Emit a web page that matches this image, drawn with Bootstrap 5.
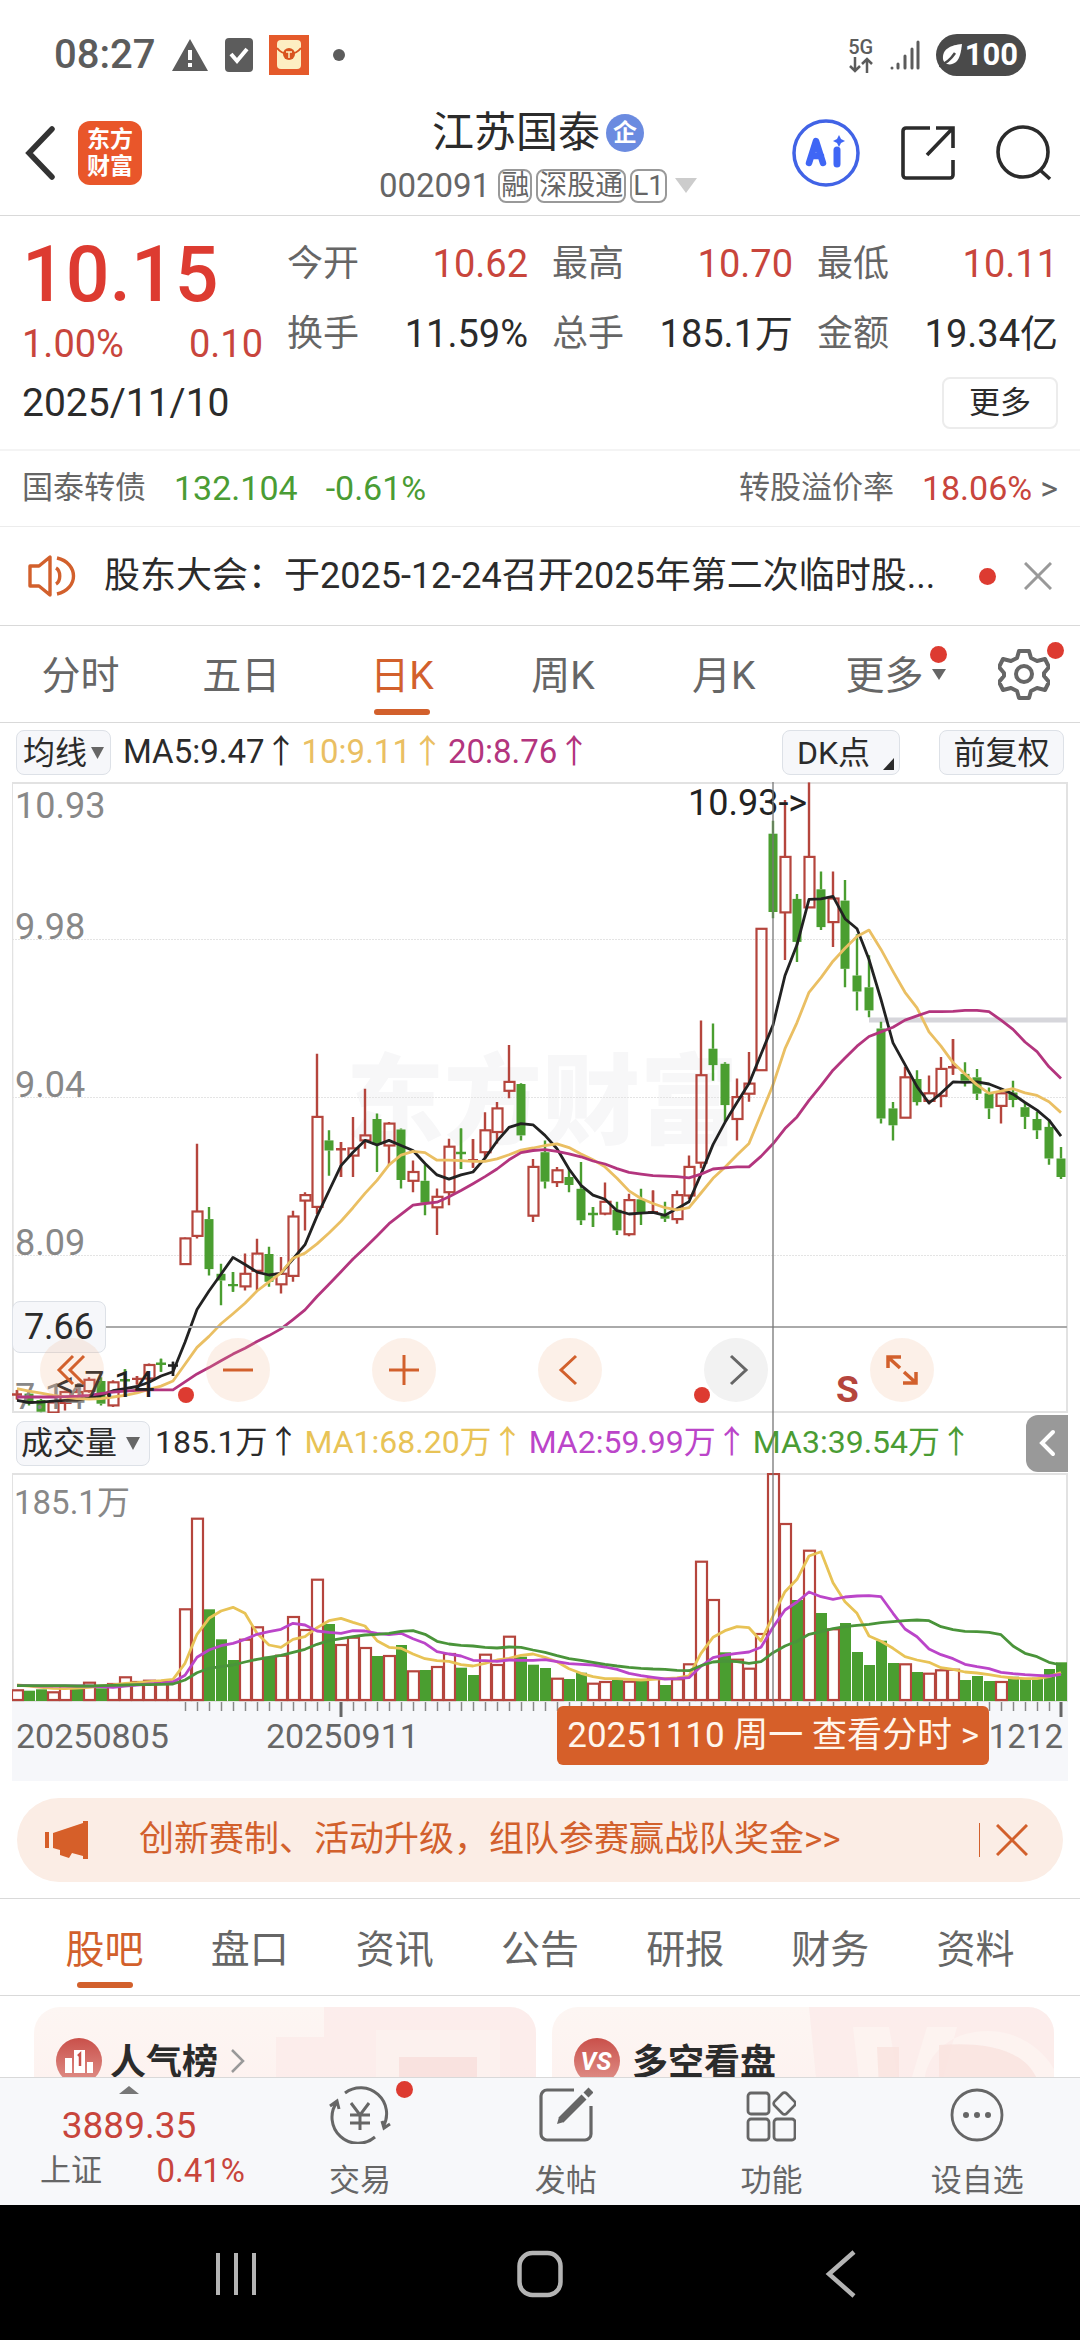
<!DOCTYPE html>
<html lang="zh-CN">
<head>
<meta charset="utf-8">
<meta name="viewport" content="width=device-width, initial-scale=1">
<title>江苏国泰 002091</title>
<link href="https://cdn.jsdelivr.net/npm/bootstrap@5.3.0/dist/css/bootstrap.min.css" rel="stylesheet">
<style>
  :root { --up:#c8453c; --hot:#dd3b31; --down:#4a9c34; --brand:#d2602c; --ink:#2b2b2b; --mute:#666; --line:#d9d9d9; }
  body { font-family: Roboto, "Noto Sans CJK SC", sans-serif; color: var(--ink); background: #fff; height: 100vh; overflow: hidden; line-height: 1.3; }
  body > * { flex: none; }
  a { color: inherit; text-decoration: none; }
  button { color: inherit; }
  svg { display: block; flex: none; }
  .plain { border: 0; background: none; padding: 0; }
  .up { color: var(--up); } .down { color: var(--down); } .mute { color: var(--mute); } .brand { color: var(--brand); }
  .rule { border-bottom: 1px solid var(--line); }
  .dot { width: 17px; height: 17px; border-radius: 50%; background: var(--hot); }

  .status { height: 90px; padding: 20px 54px 0; color: #5c5c5c; font-size: 40px; font-weight: 500; }
  .power { background: #4a4a4a; color: #fff; border-radius: 21px; height: 42px; padding: 0 8px 0 3px; font-size: 31px; font-weight: 700; }
  .net { font-size: 20px; line-height: 20px; }

  .top { height: 126px; padding: 0 28px 0 24px; }
  .side { width: 290px; }
  .acts { gap: 41px; }
  .logo { width: 64px; height: 64px; border-radius: 12px; background: #e9562a; color: #fff; font-size: 23px; line-height: 27px; font-weight: 700; margin-left: 22px; }
  .stock { font-size: 42px; line-height: 50px; }
  .corp { width: 38px; height: 38px; border-radius: 50%; background: #6b8be0; color: #fff; font-size: 24px; line-height: 38px; font-weight: 700; text-align: center; margin-left: 6px; }
  .code { font-size: 33px; line-height: 40px; }
  .chip { border: 2px solid #999; border-radius: 8px; font-size: 28px; line-height: 30px; padding: 0 1px; }

  .quote { padding: 19px 22px 0; }
  .quote .row { --bs-gutter-x: 24px; }
  .price { font-size: 77px; line-height: 80px; font-weight: 500; color: var(--hot); }
  .fig { font-size: 38px; line-height: 50px; }
  .fig .lbl { font-size: 36px; color: var(--mute); }
  .day { font-size: 39px; }
  .more { border: 2px solid #ececec; border-radius: 8px; background: #fff; height: 52px; width: 116px; font-size: 31px; line-height: 44px; }
  .bond { height: 78px; padding: 0 22px; font-size: 34px; border-top: 2px solid #f4f4f4; border-bottom: 1px solid #ececec; }
  .bond .lbl { font-size: 31px; color: var(--mute); }
  .notice { height: 99px; padding: 0 28px; font-size: 36px; }

  .tabs { font-size: 39px; color: var(--mute); }
  .tabs a { position: relative; flex: 1 1 0; text-align: center; }
  .tabs a.on { color: var(--brand); }
  .tabs a.on::after { content: ""; position: absolute; left: 50%; margin-left: -28px; width: 56px; height: 6px; border-radius: 3px; background: var(--brand); }
  .period { height: 97px; }
  .period a { line-height: 101px; }
  .period a.on::after { bottom: 7px; }
  .sections { height: 98px; padding: 0 32px; border-top: 1px solid var(--line); }
  .sections a { line-height: 102px; height: 96px; }
  .period a { height: 96px; }
  .sections a.on::after { bottom: 7px; }
  .tabdot { position: absolute; top: 20px; right: 18px; }
  .tabtri { position: absolute; top: 43px; right: 19px; }
  .period a.gear { flex: 0 0 115px; }
  .gear svg { margin-left: 33px; }

  .tool { border: 1px solid #dde1e7; border-radius: 8px; background: #f6f7fa; font-size: 32px; line-height: 42px; height: 45px; padding: 0 6px; }
  .dk { width: 118px; padding: 0 5px 0 14px; }
  .adj { width: 125px; margin-left: 39px; }
  .indic { height: 59px; padding: 0 16px; font-size: 33px; }
  .volbar { height: 60px; padding-left: 4px; font-size: 32px; gap: 5px; }
  .volbar .tool { padding: 0 4px; }
  .charts { margin: 0 12px; }
  .plot { width: 100%; height: auto; }
  .charts text { font-family: Roboto, "Noto Sans CJK SC", sans-serif; }
  .cross { position: absolute; top: 0; left: 72.06%; width: 2px; margin-left: -1px; height: 920px; background: #777; opacity: .65; }
  .pads { position: absolute; left: 28px; bottom: 11px; gap: 102px; }
  .pads button { width: 64px; height: 64px; border-radius: 50%; background: rgba(240,170,130,.18); }
  .pads .off { background: #f2f2f2; }
  .pads svg { width: 40px; height: 40px; margin: auto; }
  .crossprice { position: absolute; left: 0; top: 519px; width: 94px; height: 52px; border: 1px solid #dde1e7; border-radius: 8px; background: #f6f7fa; font-size: 36px; line-height: 50px; text-align: center; }
  .fold { background: #999; border-radius: 12px 0 0 12px; width: 42px; height: 57px; }
  .daytip { position: absolute; right: 79px; bottom: 16px; background: #d65f29; border-radius: 6px; color: #fff6ec; font-size: 35px; line-height: 59px; padding: 0 10px; white-space: nowrap; }

  .promo { margin: 17px 17px 16px; height: 84px; border-radius: 42px; background: #fbede5; padding: 0 35px 0 28px; font-size: 35px; }
  .promo a { margin-left: 50px; }
  .feed { flex: 1 1 0; min-height: 0; overflow: hidden; padding: 11px 26px 0 34px; gap: 16px; }
  .tile { position: relative; flex: 1 1 0; height: 160px; border-radius: 26px; overflow: hidden; background: linear-gradient(#fdf6f3, #fdeeec); font-size: 36px; line-height: 48px; font-weight: 700; padding: 28px 22px; }
  .tile .art { position: absolute; right: 0; top: 0; }
  .tile .face { position: relative; }
  .face span { padding-top: 4px; }
  .dock { height: 128px; background: #f7f8fa; border-top: 1px solid var(--line); font-size: 31px; color: var(--mute); }
  .index { width: 23.8%; padding: 28px 12px 0 40px; }
  .index .num { font-size: 37px; line-height: 40px; padding-right: 27px; }
  .index .pct { font-size: 33px; line-height: 50px; }
  .index .mute { font-size: 31px; }
  .dock a.item { flex: 1 1 0; padding-top: 8px; position: relative; }
  .item .dot { position: absolute; top: 3px; left: 50%; margin-left: 36px; }
  .item span.cap { line-height: 40px; margin-top: 17px; }
  .sysnav { height: 135px; background: #000; padding: 3px 208px 0; }
</style>
</head>
<body class="d-flex flex-column">

<div class="status d-flex align-items-center">
  <span>08:27</span>
  <svg class="ms-3" width="38" height="34" viewBox="0 0 38 34"><path d="M19 1 37 33H1z" fill="#5c5c5c"/><path d="M19 12v10M19 25v4" stroke="#fff" stroke-width="4"/></svg>
  <svg class="ms-3" width="28" height="34" viewBox="0 0 28 34"><rect width="28" height="34" rx="4" fill="#5c5c5c"/><path d="M6 16l6 7 10-12" fill="none" stroke="#fff" stroke-width="4"/></svg>
  <svg class="ms-3" width="40" height="40" viewBox="0 0 40 40"><rect width="40" height="40" fill="#e55a2b"/><rect x="8" y="5" width="24" height="29" rx="4" fill="#fdeec2"/><path d="M8 13c6 8 18 8 24 0" fill="none" stroke="#d9531f" stroke-width="2"/><circle cx="20" cy="19" r="6" fill="#d9531f"/><path d="M17 17h6M20 17v6" stroke="#fdeec2" stroke-width="1.5"/></svg>
  <svg class="ms-4" width="12" height="12" viewBox="0 0 12 12"><circle cx="6" cy="6" r="6" fill="#5c5c5c"/></svg>
  <div class="net ms-auto d-flex flex-column align-items-center">
    <span>5G</span>
    <svg width="26" height="16" viewBox="0 0 26 16" fill="none" stroke="#5c5c5c" stroke-width="2.5"><path d="M7 0v14M2 9l5 5 5-5M19 16V2M14 7l5-5 5 5"/></svg>
  </div>
  <svg class="mx-3" width="30" height="30" viewBox="0 0 30 30" stroke="#5c5c5c" stroke-width="3" stroke-linecap="round"><path d="M2 28v0M8 28v-4M15 28V16M22 28V9M28 28V2"/></svg>
  <div class="power d-flex align-items-center">
    <svg width="26" height="26" viewBox="0 0 26 26"><path d="M23 2C12 3 3 7 4 17c1 6 8 7 13 3 4-4 5-10 6-18z" fill="#fff"/><path d="M0 24c6-2 12-7 16-13" stroke="#4a4a4a" stroke-width="2.5" fill="none"/></svg>
    <span>100</span>
  </div>
</div>

<header class="top rule d-flex align-items-center justify-content-between">
  <div class="side d-flex align-items-center">
    <button class="plain" aria-label="返回"><svg width="32" height="54" viewBox="0 0 32 54" fill="none" stroke="#333" stroke-width="5.500" stroke-linecap="round"><path d="M28 3 5 27l23 24"/></svg></button>
    <a href="#" class="logo d-flex flex-column align-items-center justify-content-center"><span>东方</span><span>财富</span></a>
  </div>
  <div class="d-flex flex-column align-items-center pt-2">
    <div class="d-flex align-items-center"><h1 class="stock m-0 fw-normal">江苏国泰</h1><span class="corp">企</span></div>
    <div class="d-flex align-items-center gap-1 code mute pt-2"><span class="me-1">002091</span><span class="chip">融</span><span class="chip">深股通</span><span class="chip">L1</span>
      <svg class="ms-1" width="22" height="15" viewBox="0 0 22 15"><path d="M0 0h22L11 15z" fill="#ccc"/></svg></div>
  </div>
  <div class="side acts d-flex align-items-center justify-content-end">
    <button class="plain" aria-label="AI"><svg width="68" height="68" viewBox="0 0 68 68"><circle cx="34" cy="34" r="32" fill="none" stroke="#4163e6" stroke-width="3.5"/><path d="M17 44 24 22l7 22M20 37h9" fill="none" stroke="#3f66f5" stroke-width="6.5" stroke-linejoin="round" stroke-linecap="round"/><path d="M45 31v14" stroke="#3f66f5" stroke-width="7" stroke-linecap="round"/><path d="M47 16l2 4 4 2-4 2-2 4-2-4-4-2 4-2z" fill="#3f66f5"/></svg></button>
    <button class="plain" aria-label="分享"><svg width="54" height="54" viewBox="0 0 54 54" fill="none" stroke="#2b2b2b" stroke-width="3.6"><path d="M29 2H5a3 3 0 0 0-3 3v44a3 3 0 0 0 3 3h44a3 3 0 0 0 3-3V34M26 29 51 3M35 2h17v20"/></svg></button>
    <button class="plain" aria-label="搜索"><svg width="56" height="56" viewBox="0 0 56 56" fill="none" stroke="#2b2b2b" stroke-width="3.6"><circle cx="27" cy="27" r="25"/><path d="M44 45l10 9"/></svg></button>
  </div>
</header>

<section class="quote">
  <div class="row">
    <div class="col-3">
      <div class="price">10.15</div>
      <div class="fig up d-flex justify-content-between pt-1"><span>1.00%</span><span>0.10</span></div>
    </div>
    <div class="col-3 fig pt-1">
      <div class="d-flex justify-content-between"><span class="lbl">今开</span><span class="up">10.62</span></div>
      <div class="d-flex justify-content-between mt-3 pt-1"><span class="lbl">换手</span><span>11.59%</span></div>
    </div>
    <div class="col-3 fig pt-1">
      <div class="d-flex justify-content-between"><span class="lbl">最高</span><span class="up">10.70</span></div>
      <div class="d-flex justify-content-between mt-3 pt-1"><span class="lbl">总手</span><span>185.1万</span></div>
    </div>
    <div class="col-3 fig pt-1">
      <div class="d-flex justify-content-between"><span class="lbl">最低</span><span class="up">10.11</span></div>
      <div class="d-flex justify-content-between mt-3 pt-1"><span class="lbl">金额</span><span>19.34亿</span></div>
    </div>
  </div>
  <div class="d-flex justify-content-between align-items-center fig pt-2">
    <span class="day">2025/11/10</span><button class="more">更多</button>
  </div>
</section>

<div class="mt-3 pt-1">
  <a href="#" class="bond d-flex align-items-center">
    <span class="lbl">国泰转债</span><span class="down ms-4 ps-1">132.104</span><span class="down ms-4 ps-1">-0.61%</span>
    <span class="lbl ms-auto">转股溢价率</span><span class="up ms-4 ps-1">18.06%</span><span class="mute ms-2">&gt;</span>
  </a>
</div>

<div class="notice rule d-flex align-items-center">
  <svg width="48" height="42" viewBox="0 0 48 42" fill="none" stroke="#d2602c" stroke-width="3.4"><path d="M2 11h9L22 2v38L11 31H2z" stroke-linejoin="round"/><path d="M28 13c5 3 5 13 0 16M29 3c22 5 22 31 0 36"/></svg>
  <a href="#" class="ms-4 ps-1">股东大会：于2025-12-24召开2025年第二次临时股...</a>
  <span class="dot ms-auto"></span>
  <button class="plain ms-4 ps-1" aria-label="关闭"><svg width="28" height="28" viewBox="0 0 28 28" stroke="#999" stroke-width="3"><path d="M1 1l26 26M27 1 1 27"/></svg></button>
</div>

<nav class="tabs period rule d-flex">
  <a href="#">分时</a><a href="#">五日</a><a href="#" class="on">日K</a><a href="#">周K</a><a href="#">月K</a>
  <a href="#">更多<i class="dot tabdot"></i><svg class="tabtri" width="14" height="11" viewBox="0 0 14 11"><path d="M0 0h14L7 11z" fill="#666"/></svg></a>
  <a href="#" class="gear d-flex align-items-center" aria-label="设置">
    <svg width="52" height="52" viewBox="-26 -26 52 52" fill="none" stroke="#666" stroke-width="4" stroke-linejoin="round"><path d="M-5-23H5l2 7 6 3 8-2 4 8-5 6v3l5 6-4 8-8-2-6 3-2 7H-5l-2-7-6-3-8 2-4-8 5-6v-3l-5-6 4-8 8 2 6-3z"/><circle r="8"/></svg>
    <i class="dot position-absolute top-0 end-0 mt-3 me-3"></i>
  </a>
</nav>

<div class="indic d-flex align-items-center">
  <button class="tool d-flex align-items-center">均线<svg class="ms-1" width="13" height="13" viewBox="0 0 13 13"><path d="M0 1h13L6.500 13z" fill="#666"/></svg></button>
  <span class="ms-2 ps-1">MA5:9.47↑</span><span class="ms-1" style="color:#eabf63">10:9.11↑</span><span class="ms-1" style="color:#b3357e">20:8.76↑</span>
  <button class="tool dk ms-auto d-flex align-items-end justify-content-between">DK点<svg class="mb-1" width="11" height="12" viewBox="0 0 11 12"><path d="M11 0v12H0z" fill="#2b2b2b"/></svg></button>
  <button class="tool adj">前复权</button>
</div>

<main class="charts position-relative">
  <div class="position-relative">
    <svg class="plot" id="kline" viewBox="0 0 1056 631" role="img" aria-label="日K线"></svg>
    <div class="crossprice">7.66</div>
    <div class="pads d-flex">
      <button class="plain" aria-label="最早"><svg viewBox="0 0 40 40" fill="none" stroke="#d2602c" stroke-width="3"><path d="M21 6 7 20l14 14M32 6 18 20l14 14"/></svg></button>
      <button class="plain" aria-label="缩小"><svg viewBox="0 0 40 40" fill="none" stroke="#d2602c" stroke-width="3"><path d="M5 20h30"/></svg></button>
      <button class="plain" aria-label="放大"><svg viewBox="0 0 40 40" fill="none" stroke="#d2602c" stroke-width="3"><path d="M5 20h30M20 5v30"/></svg></button>
      <button class="plain" aria-label="左移"><svg viewBox="0 0 40 40" fill="none" stroke="#d2602c" stroke-width="3"><path d="M26 6 11 20l15 14"/></svg></button>
      <button class="plain off" aria-label="右移"><svg viewBox="0 0 40 40" fill="none" stroke="#666" stroke-width="3"><path d="M15 6l15 14-15 14"/></svg></button>
      <button class="plain" aria-label="全屏"><svg viewBox="0 0 40 40" fill="none" stroke="#d2602c" stroke-width="3.5"><path d="M6 18V7h13M7 8l11 10M34 22v11H21M33 32 22 22"/></svg></button>
    </div>
  </div>

  <div class="volbar d-flex align-items-center">
    <button class="tool d-flex align-items-center">成交量<svg class="ms-2 me-1" width="16" height="13" viewBox="0 0 14 13"><path d="M0 0h14L7 13z" fill="#666"/></svg></button>
    <span>185.1万↑</span><span style="color:#e8c356">MA1:68.20万↑</span><span style="color:#bb45c9">MA2:59.99万↑</span><span style="color:#4a9c34">MA3:39.54万↑</span>
    <button class="plain fold ms-auto d-flex align-items-center justify-content-center" aria-label="展开"><svg width="18" height="28" viewBox="0 0 18 28" fill="none" stroke="#fff" stroke-width="4" stroke-linecap="round"><path d="M15 3 4 14l11 11"/></svg></button>
  </div>

  <svg class="plot" id="volume" viewBox="0 0 1056 308" role="img" aria-label="成交量"></svg>
  <div class="cross"></div>
  <a href="#" class="daytip">20251110 周一 查看分时 &gt;</a>
</main>

<div class="promo d-flex align-items-center brand">
  <svg width="44" height="40" viewBox="0 0 44 40" fill="#d65f29"><path d="M0 12h4v16H0zM8 13 38 3V1h5v38h-5v-3l-11-3-3 5-9-3v-5l-7-2z"/></svg>
  <a href="#">创新赛制、活动升级，组队参赛赢战队奖金&gt;&gt;</a>
  <svg class="ms-auto me-3" width="1" height="34"><rect width="1" height="34" fill="#d2602c"/></svg>
  <button class="plain" aria-label="关闭"><svg width="32" height="32" viewBox="0 0 32 32" stroke="#d2602c" stroke-width="3"><path d="M1 1l30 30M31 1 1 31"/></svg></button>
</div>

<nav class="tabs sections rule d-flex">
  <a href="#" class="on">股吧</a><a href="#">盘口</a><a href="#">资讯</a><a href="#">公告</a><a href="#">研报</a><a href="#">财务</a><a href="#">资料</a>
</nav>

<section class="feed d-flex">
  <a href="#" class="tile">
    <svg class="art" width="260" height="160" viewBox="0 0 260 160"><path d="M0 30h48V0h212v160H0z" fill="#fbeae8" opacity=".7"/><path d="M100 23h124v137H100z" fill="#fcf1ee"/><path d="M123 50h78v110h-78z" fill="#f9e2df"/></svg>
    <div class="face d-flex align-items-center">
      <svg width="46" height="46" viewBox="0 0 46 46"><defs><linearGradient id="rd" x1="0" y1="0" x2="0" y2="1"><stop stop-color="#c9504a"/><stop offset="1" stop-color="#e0928b"/></linearGradient></defs><circle cx="23" cy="23" r="23" fill="url(#rd)"/><path d="M9 20h7v15H9zM18 12h11v23H18zM31 24h6v11h-6z" fill="#fff"/><path d="M22 18l2-2v12" fill="none" stroke="#c9504a" stroke-width="2.500"/></svg>
      <span class="ms-2">人气榜</span>
      <svg class="ms-2" width="22" height="26" viewBox="-4 0 22 26" fill="none" stroke="#999" stroke-width="2.500"><path d="M2 2l11 11L2 24"/></svg>
    </div>
  </a>
  <a href="#" class="tile">
    <svg class="art" width="245" height="160" viewBox="0 0 245 160"><path d="M0 0h245v160H16z" fill="#fbeae8" opacity=".7"/><path d="M44 20h36l14 80 24-80h30L110 160H60zM245 62c-14-24-40-38-66-38-36 0-64 22-64 56 0 40 40 46 60 80h70z" fill="#fdf3f0"/><path d="M68 40h22v120H74zM130 38c50-4 86 6 98 34l-20 6c-30-20-60-4-56 82h-22z" fill="#f9e2df" opacity=".8"/></svg>
    <div class="face d-flex align-items-center">
      <svg width="46" height="46" viewBox="0 0 46 46"><circle cx="23" cy="23" r="23" fill="url(#rd)"/><text x="22" y="32" text-anchor="middle" font-size="25" font-style="italic" font-weight="700" fill="#fff" font-family="Roboto, sans-serif">VS</text></svg>
      <span class="ms-2 ps-1">多空看盘</span>
    </div>
  </a>
</section>

<footer class="dock d-flex">
  <a href="#" class="index up position-relative">
    <svg class="position-absolute top-0 start-50 translate-middle-x mt-2" width="20" height="8" viewBox="0 0 20 8"><path d="M0 8 10 0l10 8z" fill="#777"/></svg>
    <div class="num text-center">3889.35</div>
    <div class="pct d-flex justify-content-between"><span class="mute">上证</span><span>0.41%</span></div>
  </a>
  <a href="#" class="item d-flex flex-column align-items-center"><i class="dot"></i>
    <svg width="62" height="58" viewBox="0 0 62 58" fill="none" stroke="#666" stroke-width="3"><path d="M16 7a26 26 0 0 1 38 34M46 51A26 26 0 0 1 8 16M1 20l7-5 2 8M61 38l-6 4-2-7M22 17l9 12 9-12M31 29v15M21 29h20M21 37h20"/></svg><span class="cap">交易</span></a>
  <a href="#" class="item d-flex flex-column align-items-center">
    <svg width="54" height="58" viewBox="0 0 54 58" fill="none" stroke="#666" stroke-width="3.200"><path d="M35 4H8a6 6 0 0 0-6 6v38a6 6 0 0 0 6 6h38a6 6 0 0 0 6-6V20"/><path d="M45 11 22 34" stroke-width="7"/><path d="M47 9l5-5" stroke-width="7"/><path d="M18 38l2-7 5 5z" fill="#666" stroke="none"/></svg><span class="cap">发帖</span></a>
  <a href="#" class="item d-flex flex-column align-items-center">
    <svg width="50" height="58" viewBox="0 0 50 58" fill="none" stroke="#666" stroke-width="2.800"><rect x="2" y="7" width="21" height="21" rx="3"/><rect x="2" y="33" width="21" height="21" rx="3"/><rect x="28" y="33" width="21" height="21" rx="3"/><rect x="30" y="9" width="17" height="17" rx="3" transform="rotate(45 38.500 17.500)"/></svg><span class="cap">功能</span></a>
  <a href="#" class="item d-flex flex-column align-items-center">
    <svg width="54" height="58" viewBox="0 0 54 58"><circle cx="27" cy="29" r="25" fill="none" stroke="#666" stroke-width="2.800"/><g fill="#666"><circle cx="16" cy="29" r="3"/><circle cx="27" cy="29" r="3"/><circle cx="38" cy="29" r="3"/></g></svg><span class="cap">设自选</span></a>
</footer>

<div class="sysnav d-flex align-items-center justify-content-between">
  <button class="plain" aria-label="最近任务"><svg width="56" height="48" viewBox="0 0 56 48" stroke="#b4b4b4" stroke-width="4"><path d="M10 3v42M28 3v42M46 3v42"/></svg></button>
  <button class="plain" aria-label="主屏幕"><svg width="46" height="48" viewBox="0 0 46 48" fill="none" stroke="#b4b4b4" stroke-width="4.500"><rect x="2.500" y="3" width="41" height="42" rx="13"/></svg></button>
  <button class="plain" aria-label="返回上页"><svg width="56" height="48" viewBox="0 0 56 48" fill="none" stroke="#b4b4b4" stroke-width="4.500"><path d="M38 2 13 24l25 22"/></svg></button>
</div>

<script src="https://cdn.jsdelivr.net/npm/bootstrap@5.3.0/dist/js/bootstrap.bundle.min.js"></script>
<script>
// Each day: colour (r rise, g fall, k flat), high, body top, body bottom, low, measured down from the top of the scale.
const days = `r1473,1482,1486,1496 g1480,1482,1506,1510 g1495,1497,1525,1526 r1500,1503,1527,1529 r1475,1478,1504,1522 r1470,1478,1490,1500 r1443,1449,1476,1480 g1443,1452,1506,1510 r1450,1455,1510,1514 g1424,1448,1452,1466 r1440,1446,1448,1460 r1410,1414,1446,1450 g1399,1409,1413,1430 k1406,1414,1416,1440
r1111,1113,1174,1176 r888,1049,1107,1113 g1038,1067,1186,1201 g1173,1197,1213,1272 g1193,1222,1226,1240 r1149,1197,1227,1237 r1114,1149,1190,1237 g1133,1150,1216,1228 r1157,1197,1222,1244 r1047,1061,1202,1216 r1003,1010,1023,1094 r674,824,1038,1055 g856,880,904,964 r884,899,903,967 r824,899,916,967 r757,868,880,900
g816,829,890,955 r836,840,892,940 g852,854,974,994 r928,955,976,1003 g937,976,1028,1058 r994,1014,1039,1105 r876,895,1003,1034 g852,909,911,948 r877,926,928,945 r813,856,908,925 r789,804,860,887 r653,741,762,780 g744,746,868,880 r924,943,1059,1074 g880,908,978,994 r943,951,979,991
g947,967,986,1003 g931,995,1070,1081 g1038,1052,1058,1086 r980,1026,1054,1058 g1026,1045,1094,1105 r1007,1022,1103,1108 g995,1020,1055,1081 r999,1050,1052,1055 g1026,1058,1066,1074 r999,1010,1067,1078 r916,943,1011,1020 r595,725,933,946 g602,662,701,738 g694,698,796,835 r733,777,829,880 r670,745,769,788
r377,377,713,713 g120,151,337,352 r71,206,338,451 g294,306,408,456 r29,206,326,326 g241,283,373,380 r241,305,361,420 g261,310,472,516 g390,488,526,571 g440,516,571,587 g598,614,828,840 g789,804,844,880 r705,730,826,826 g713,734,789,797 r726,768,786,794 r682,710,774,801
r639,704,708,724 g694,722,738,752 g710,730,769,784 g754,768,804,829 r756,768,798,840 g738,766,784,801 g790,801,824,853 g812,829,856,877 g830,848,923,938 g896,923,967,972`.split(/\s+/).map(s => [s[0], ...s.slice(1).split(',').map(Number)]);
const ma5 = [1498,1503,1502,1500,1498,1497,1492,1486,1475,1470,1465,1455,1440,1430,1360,1282,1238,1198,1158,1175,1193,1200,1196,1162,1128,1060,1000,940,908,880,891,880,892,904,935,962,972,962,955,922,882,849,840,843,868,900,948,987,1010,1020,1047,1055,1053,1051,1058,1042,1026,960,890,837,790,745,675,606,488,415,307,306,300,353,377,450,545,648,700,752,791,768,741,742,741,746,757,770,790,808,832,870];
const ma10 = [1470,1476,1481,1486,1490,1494,1495,1494,1490,1486,1480,1472,1464,1452,1412,1372,1346,1316,1292,1267,1238,1216,1195,1160,1148,1126,1100,1072,1040,1006,975,938,915,906,909,927,927,928,930,930,924,914,903,898,892,888,897,912,926,943,970,1000,1018,1030,1040,1045,1040,1005,970,944,915,887,818,748,662,600,528,493,454,423,395,380,426,478,528,565,622,656,695,722,748,768,763,757,767,773,788,814];
const ma20 = [1490,1490,1490,1490,1489,1488,1486,1482,1478,1476,1474,1473,1473,1473,1454,1435,1420,1404,1388,1374,1358,1344,1328,1306,1283,1251,1222,1192,1162,1135,1107,1078,1056,1034,1030,1027,1014,999,983,966,948,926,909,904,902,906,912,919,929,936,947,956,960,964,965,966,969,960,948,945,943,943,918,888,852,824,785,750,713,684,656,633,622,611,594,584,574,574,573,571,571,574,594,616,646,669,705,733];
// Volume bar tops on a scale whose ceiling is 219 and floor 903.
const vols = 'r868 g872 g868 r874 r856 g858 r845 g865 r849 r829 r843 r839 r843 r845 r625 r353 g628 g718 g780 r716 r679 g770 r764 r648 r687 r536 g672 r732 r710 r741 g768 r765 g735 r811 g810 r798 r759 g803 g825 r761 r792 r707 g770 g794 g804 r833 g837 g818 r848 r843 g840 r842 g838 r832 g855 r835 r790 r482 r597 g757 r776 r803 r699 r219 r369 g600 r449 g639 r685 g669 g756 g795 g722 g789 r790 g816 r818 r808 r806 g840 g828 g843 r843 g830 g836 g833 g807 g787'.split(' ');
const v1 = [855,858,862,865,866,864,862,858,855,850,848,845,842,838,790,703,655,633,622,640,700,735,742,718,710,683,662,655,667,678,722,742,745,762,776,782,784,794,798,790,780,775,766,762,772,785,806,820,830,836,836,838,840,838,836,834,828,760,712,692,680,683,723,648,575,538,468,455,548,605,640,708,724,745,770,780,787,803,808,816,819,824,830,834,836,836,830,818];
const v2 = [856,857,858,858,858,858,858,860,862,858,855,852,850,846,826,772,750,737,730,718,703,695,688,670,675,693,697,700,692,693,700,704,700,716,730,755,762,768,781,782,784,780,781,781,779,785,791,793,795,801,808,820,827,832,837,836,833,799,773,765,760,756,742,682,630,606,576,590,598,591,588,587,590,640,687,710,747,764,776,793,800,806,817,821,824,826,828,823];
const v3 = [857,857,857,857,857,858,858,857,856,855,854,854,853,852,840,818,805,800,795,786,778,772,766,757,748,733,722,716,710,705,703,700,694,692,703,724,732,736,738,742,744,741,742,750,757,767,776,781,787,793,798,802,805,807,808,811,812,797,786,783,785,790,785,758,738,724,703,695,686,680,676,673,668,665,662,660,662,680,689,694,695,697,704,738,760,770,787,795];

const RED = '#b5453d', GREEN = '#4a9e30', BLACK = '#222';
const cx = i => 5 + 12 * i;
const py = v => Math.round((v - 28) * 631 / 1500 * 10) / 10;
const vy = v => Math.round((v - 219) / 3 * 10) / 10;
const line = (arr, f, c) => `<polyline fill="none" stroke="${c}" stroke-width="2.800" stroke-linejoin="round" points="${arr.map((v, i) => cx(i) + ',' + f(v)).join(' ')}"/>`;
const label = (x, y, t, c, s, extra = '') => `<text x="${x}" y="${y}" fill="${c}" font-size="${s}" ${extra}>${t}</text>`;

let k = '<text x="334" y="354" font-size="98" font-weight="900" fill="#f7f7f8">东方财富</text>';
for (const y of [157.5, 315.5, 473.5]) k += `<path d="M0 ${y}h1055" stroke="#e4e4e4" stroke-dasharray="2 1"/>`;
k += '<path d="M0 1h1055v629H1z" fill="none" stroke="#e2e2e2" stroke-width="2"/><path d="M857 238h198" stroke="#d6d6db" stroke-width="5"/>';
days.forEach(([c, h, t, b, l], i) => {
  const x = cx(i), col = c === 'g' ? GREEN : c === 'k' ? BLACK : RED;
  k += `<path d="M${x} ${py(h)}V${py(t)}M${x} ${py(b)}V${py(l)}" stroke="${col}" stroke-width="2.400"/>`;
  if (b - t < 7) k += `<path d="M${x - 5} ${py((t + b) / 2)}h10M${x} ${py(h)}V${py(l)}" stroke="${col}" stroke-width="2.400"/>`;
  else if (c === 'g') k += `<rect x="${x - 4.5}" y="${py(t)}" width="9" height="${py(b) - py(t)}" fill="${col}"/>`;
  else k += `<rect x="${x - 4.5}" y="${py(t)}" width="10" height="${py(b) - py(t)}" fill="none" stroke="${col}" stroke-width="2.200"/>`;
});
k += label(3, 36, '10.93', '#888', 36) + label(3, 157, '9.98', '#888', 36) + label(3, 315, '9.04', '#888', 36) + label(3, 473, '8.09', '#888', 36) + label(3, 627, '7.14', '#888', 36);
k += line(ma5, py, BLACK) + line(ma10, py, '#eabf63') + line(ma20, py, '#b3357e');
k += label(676, 33, '10.93-&gt;', BLACK, 36) + label(44, 615, '&lt;-7.14', BLACK, 36);
k += '<path d="M94 545h961" stroke="#aaa" stroke-width="2"/><circle cx="174" cy="613" r="8" fill="#dd3b31"/><circle cx="690" cy="613" r="8" fill="#dd3b31"/>';
k += label(824, 620, 'S', RED, 37, 'font-weight="700"');
document.getElementById('kline').innerHTML = k;

let v = '<rect y="228" width="1056" height="80" fill="#f6f7fa"/><path d="M0 1h1055v227H1z" fill="none" stroke="#e2e2e2" stroke-width="2"/>';
vols.forEach((s, i) => {
  const y = vy(+s.slice(1)), x = cx(i);
  v += s[0] === 'g' ? `<rect x="${x - 5}" y="${y}" width="11" height="${228 - y}" fill="${GREEN}"/>`
    : `<rect x="${x - 5}" y="${y + 1}" width="11" height="${226 - y}" fill="#fff" stroke="${RED}" stroke-width="2.200"/>`;
  if (i > 13) v += i === 27 || i === 87 ? `<path d="M${x} 229v15" stroke="#666" stroke-width="3"/>` : `<path d="M${x + .5} 229v9" stroke="#888" stroke-width="1.500"/>`;
});
v += line(v1, vy, '#e8c356') + line(v2, vy, '#bb45c9') + line(v3, vy, '#4a943a');
v += label(2, 41, '185.1万', '#888', 33) + label(4, 275, '20250805', '#666', 34) + label(254, 275, '20250911', '#666', 34) + label(1051, 275, '1212', '#666', 33, 'text-anchor="end"');
document.getElementById('volume').innerHTML = v;
</script>
</body>
</html>
